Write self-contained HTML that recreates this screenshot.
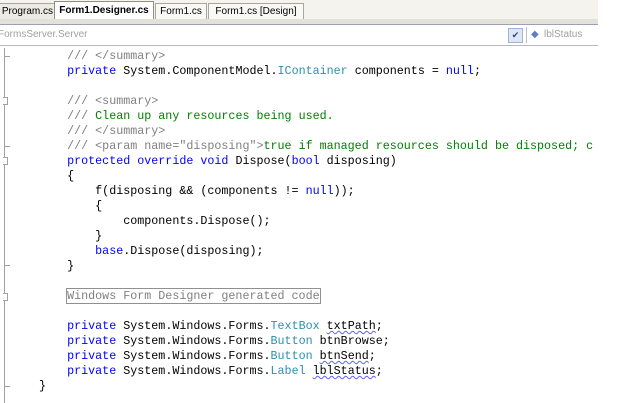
<!DOCTYPE html>
<html><head><style>
body{margin:0;width:640px;height:403px;background:#fff;overflow:hidden;position:relative;font-family:"Liberation Sans",sans-serif}
.tabs{position:absolute;left:0;top:0;width:598px;height:19px;background:#f4f3ee;border-bottom:1px solid #c9c7ba}
.tab{position:absolute;top:3px;height:15px;font-size:10px;line-height:15px;border:1px solid #a9a79a;border-bottom:none;background:#f8f8f4;color:#000;text-align:center;overflow:hidden;white-space:nowrap}
.strip{position:absolute;left:0;top:19px;width:598px;height:5px;background:#e3e2d9;border-bottom:1px solid #9c9fb5}
.bar{position:absolute;left:0;top:25px;width:598px;height:20px;background:#fff;border-bottom:1px solid #b8b8b8;font-size:10px;color:#a0a0a0;line-height:20px}
.code{position:absolute;left:11px;top:49px;width:587px;overflow:hidden;font-family:"Liberation Mono",monospace;font-size:11.7px;line-height:15px;white-space:pre;color:#000}
.k{color:#0000ff}.c{color:#008000}.g{color:#808080}.t{color:#2b91af}
.sq{text-decoration:underline wavy #6060ff;text-decoration-thickness:1px}
.gut{position:absolute;left:4px;top:48px;width:1px;height:355px;background:#a0a0a0}
.m{position:absolute;left:4px;width:6px;height:1px;background:#a0a0a0}
.bx{position:absolute;left:3px;width:4px;height:6px;border:1px solid #a0a0a0;border-left:none;background:#fff}
</style></head><body>
<div class="tabs">
<div class="tab" style="left:-8px;width:60px;background:#ecebe4;text-align:right;padding-right:2px">Program.cs</div>
<div class="tab" style="left:54px;top:1px;height:18px;width:98px;font-weight:bold;background:#fff;border-color:#8f8d80;line-height:17px">Form1.Designer.cs</div>
<div class="tab" style="left:155px;width:50px">Form1.cs</div>
<div class="tab" style="left:208px;width:94px">Form1.cs [Design]</div>
</div>
<div class="strip"></div>
<div class="bar"><span style="position:absolute;left:-2px">FormsServer.Server</span>
<div style="position:absolute;left:508px;top:3px;width:13px;height:13px;border:1px solid #9fb5d6;background:#dde6f4;font-size:9px;line-height:13px;text-align:center;color:#30407a">&#x2714;</div>
<div style="position:absolute;left:526px;top:2px;width:1px;height:16px;background:#c0c0c0"></div>
<span style="position:absolute;left:531px;color:#5b7fc4">&#x25C6;</span><span style="position:absolute;left:544px;color:#a0a0a0">lblStatus</span>
</div>
<div class="gut"></div>
<div class="m" style="top:56px"></div>
<div class="bx" style="top:97px"></div>
<div class="m" style="top:146px"></div>
<div class="bx" style="top:157px"></div>
<div class="m" style="top:265px"></div>
<div class="bx" style="top:293px"></div>
<div class="m" style="top:386px"></div>
<div class="code" style="width:585px">        <span class="g">/// &lt;/summary&gt;</span>
        <span class="k">private</span> System.ComponentModel.<span class="t">IContainer</span> components = <span class="k">null</span>;

        <span class="g">/// &lt;summary&gt;</span>
        <span class="g">///</span> <span class="c">Clean up any resources being used.</span>
        <span class="g">/// &lt;/summary&gt;</span>
        <span class="g">/// &lt;param name="disposing"&gt;</span><span class="c">true if managed resources should be disposed; c</span>
        <span class="k">protected</span> <span class="k">override</span> <span class="k">void</span> Dispose(<span class="k">bool</span> disposing)
        {
            f(disposing &amp;&amp; (components != <span class="k">null</span>));
            {
                components.Dispose();
            }
            <span class="k">base</span>.Dispose(disposing);
        }

        <span class="g" style="outline:1px solid #909090;outline-offset:0">Windows Form Designer generated code</span>

        <span class="k">private</span> System.Windows.Forms.<span class="t">TextBox</span> <span class="sq">txtPath</span>;
        <span class="k">private</span> System.Windows.Forms.<span class="t">Button</span> btnBrowse;
        <span class="k">private</span> System.Windows.Forms.<span class="t">Button</span> <span class="sq">btnSend</span>;
        <span class="k">private</span> System.Windows.Forms.<span class="t">Label</span> <span class="sq">lblStatus</span>;
    }
</div>
</body></html>
